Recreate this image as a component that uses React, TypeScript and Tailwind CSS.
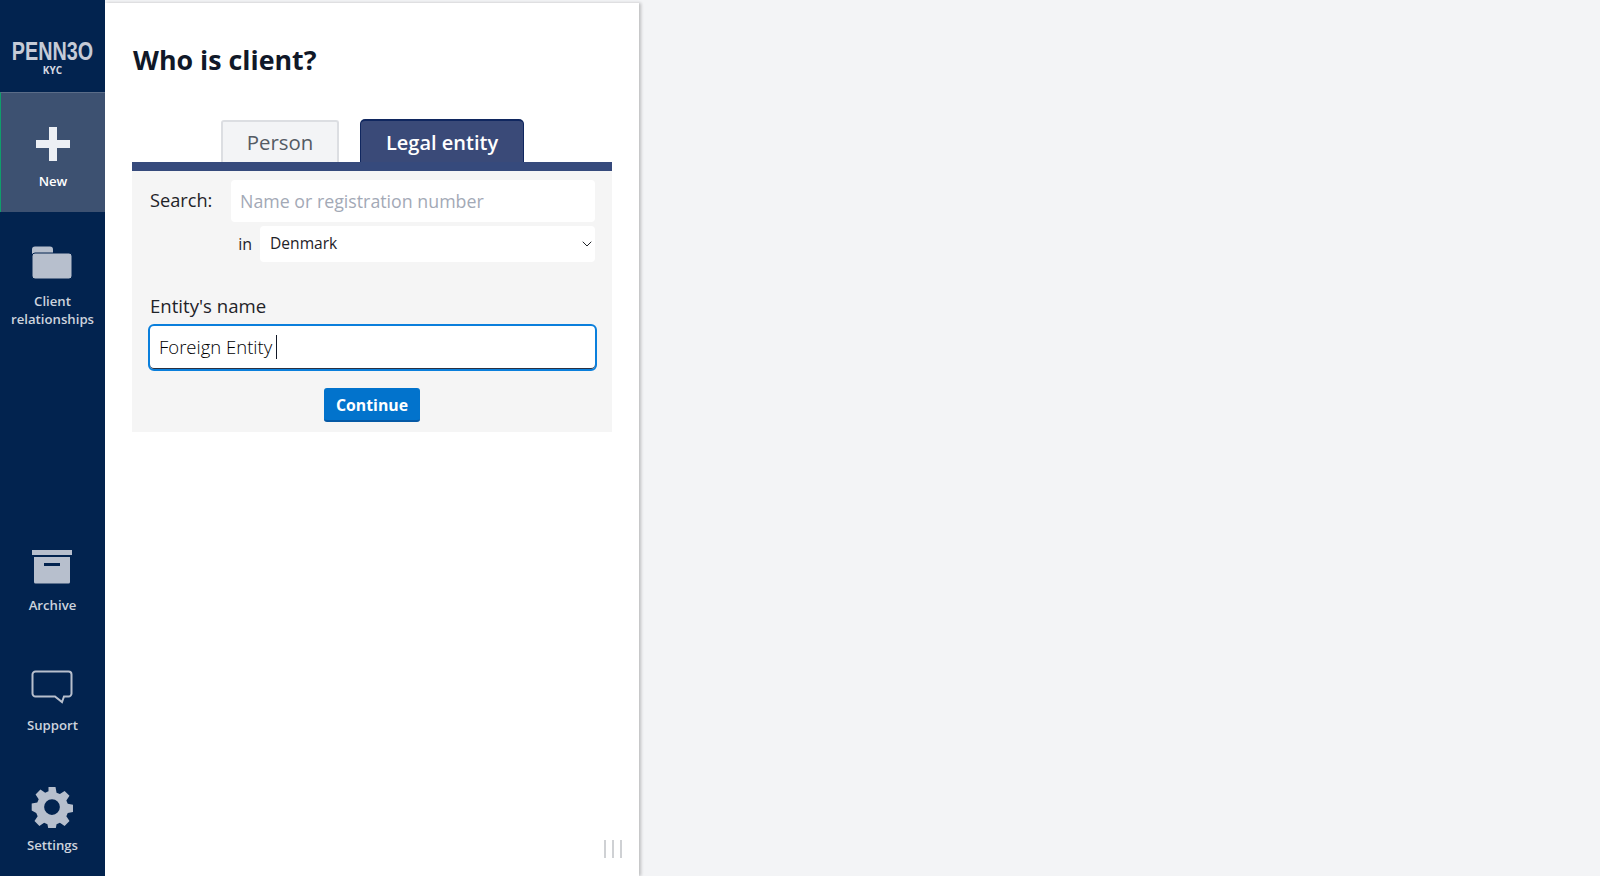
import { ReactNode } from "react";
import { ChevronDown } from "lucide-react";

const FONT = "font-['Open_Sans',sans-serif]";

function NavItem({
  label,
  icon,
  active = false,
}: {
  label: ReactNode;
  icon: ReactNode;
  active?: boolean;
}) {
  return (
    <div
      className={`flex h-[120px] flex-col items-center pt-[30px] text-center text-[13.200px] font-semibold leading-[17.500px] ${
        active
          ? "border-l border-[#0f9d6b] border-t border-t-[#5a6c88] bg-[#3d5171] text-white"
          : "text-[#cdd3dd]"
      }`}
    >
      <div className={`flex h-[42px] w-full items-center justify-center ${active ? "" : "pr-[2px]"}`}>{icon}</div>
      <div className={active ? "mt-[8px]" : "mt-[9px]"}>{label}</div>
    </div>
  );
}

const PlusIcon = () => (
  <svg width="36" height="36" viewBox="0 0 36 36" fill="#eceff4">
    <path d="M14 1h8v13h13v8H22v13h-8V22H1v-8h13z" />
  </svg>
);

const FolderIcon = () => (
  <svg width="42" height="34" viewBox="0 0 42 34" fill="#b7bfcd">
    <rect x="1" y="0.500" width="21" height="10" rx="3" />
    <rect x="1" y="7" width="40" height="26" rx="3" stroke="#02234f" strokeWidth="1" />
  </svg>
);

const ArchiveIcon = () => (
  <svg width="42" height="34" viewBox="0 0 42 34" fill="#b7bfcd">
    <rect x="1" y="0" width="40" height="5" />
    <path d="M3 7h36v25a1.500 1.500 0 0 1-1.500 1.500h-33A1.500 1.500 0 0 1 3 32zM13 13v3h16v-3z" fillRule="evenodd" />
  </svg>
);

const SupportIcon = () => (
  <svg width="42" height="34" viewBox="0 0 42 34" fill="none" stroke="#b7bfcd" strokeWidth="2">
    <path d="M4.500 1.500h33a3 3 0 0 1 3 3v19a3 3 0 0 1-3 3H33l-2 5.500-7-5.500H4.500a3 3 0 0 1-3-3v-19a3 3 0 0 1 3-3z" />
  </svg>
);

const GearIcon = () => (
  <svg width="42" height="42" viewBox="0 0 24 24" fill="#b7bfcd">
    <path
      fillRule="evenodd"
      d="M10 .6h4l.6 3.200 1.900.8 2.700-1.800 2.800 2.800-1.800 2.700.8 1.900 3.200.6v4l-3.200.6-.8 1.900 1.800 2.700-2.800 2.800-2.700-1.800-1.900.8-.6 3.200h-4l-.6-3.200-1.900-.8-2.700 1.800-2.800-2.800 1.800-2.700-.8-1.900L.4 14v-4l3.200-.6.8-1.900-1.800-2.700 2.800-2.800 2.700 1.800 1.900-.8zM12 7.500a4.500 4.500 0 1 0 0 9 4.500 4.500 0 0 0 0-9z"
    />
  </svg>
);

export default function App() {
  return (
    <div className={`flex h-screen w-screen overflow-hidden bg-[#f3f4f6] ${FONT}`}>
      {/* sidebar */}
      <div className="flex w-[105px] shrink-0 flex-col bg-[#02234f]">
        <div className="flex h-[92px] flex-col items-center pt-[38px]">
          <div className="scale-x-[0.79] whitespace-nowrap text-[25px] font-bold leading-[26px] text-[#c5cbd7] font-['Liberation_Sans',sans-serif]">
            PENN3O
          </div>
          <div className="text-[10px] font-bold leading-[12px] text-[#d5d9e1]">KYC</div>
        </div>
        <NavItem active label="New" icon={<PlusIcon />} />
        <NavItem
          label={
            <>
              Client
              <br />
              relationships
            </>
          }
          icon={<FolderIcon />}
        />
        <div className="flex-1" />
        <NavItem label="Archive" icon={<ArchiveIcon />} />
        <NavItem label="Support" icon={<SupportIcon />} />
        <NavItem label="Settings" icon={<GearIcon />} />
      </div>

      {/* main panel */}
      <div className="relative mt-[3px] flex w-[534px] shrink-0 flex-col bg-white px-[27px] shadow-[2px_0_3px_rgba(0,0,0,0.22)]">
        <h1 className="ml-[1px] mt-[39px] text-[26.800px] font-bold leading-[36px] text-[#101828]">Who is client?</h1>

        {/* tabs */}
        <div className="mt-[41px] flex items-end pl-[89px]">
          <div className="flex h-[42px] w-[118px] items-center justify-center rounded-t-[3px] border-2 border-b-0 border-[#dcdee2] bg-[#f3f4f6] text-[20.400px] font-normal text-[#555b64]">
            Person
          </div>
          <div className="ml-[21px] flex h-[43px] w-[164px] items-center justify-center rounded-t-[5px] border-x border-t-2 border-[#10275f] bg-[#3a4a78] pt-[3px] text-[20px] font-semibold text-white">
            Legal entity
          </div>
        </div>
        <div className="h-[9px] w-[480px] bg-[#364a7c]" />

        {/* form */}
        <div className="flex h-[261px] w-[480px] flex-col bg-[#f5f5f5] px-[18px] pt-[9px]">
          <div className="flex w-[445px] items-center">
            <span className="w-[81px] text-[18.200px] text-[#1f2328]">Search:</span>
            <div className="flex h-[42px] w-[364px] shrink-0 items-center rounded-[4px] bg-white px-[9px] text-[17.800px] text-[#a3a9b6]">
              Name or registration number
            </div>
          </div>
          <div className="mt-[4px] flex w-[445px] items-center justify-end">
            <span className="mr-[8px] text-[16px] text-[#1f2328]">in</span>
            <div className="flex h-[36px] w-[335px] shrink-0 items-center justify-between rounded-[4px] bg-white pl-[10px] text-[15.600px] text-[#1f2328]">
              Denmark
              <ChevronDown size={16} strokeWidth={1.500} />
            </div>
          </div>
          <div className="mt-[31px] text-[18.600px] leading-[26px] text-[#1f2328]">Entity's name</div>
          <div className="-ml-[2px] mt-[5px] flex h-[47px] w-[449px] shrink-0 items-center rounded-[6px] border-2 border-[#0a7fdc] bg-white pb-[2px] pl-[9px] text-[18.500px] font-light text-black shadow-[inset_0_-1px_0_#2a3142]">
            Foreign Entity
            <span className="ml-[4px] h-[24px] w-[1px] bg-[#111827]" />
          </div>
          <div className="mt-[17px] flex justify-center">
            <div className="flex h-[34px] w-[96px] items-center justify-center rounded-[3px] border-b-2 border-[#0559a5] bg-[#0273cc] pt-[3px] text-[15.800px] font-bold text-white">
              Continue
            </div>
          </div>
        </div>

        {/* resize handle */}
        <div className="absolute bottom-[18px] right-[17px] flex gap-[6px]">
          <div className="h-[18px] w-[2px] bg-[#cfd1d4]" />
          <div className="h-[18px] w-[2px] bg-[#cfd1d4]" />
          <div className="h-[18px] w-[2px] bg-[#cfd1d4]" />
        </div>
      </div>
    </div>
  );
}
